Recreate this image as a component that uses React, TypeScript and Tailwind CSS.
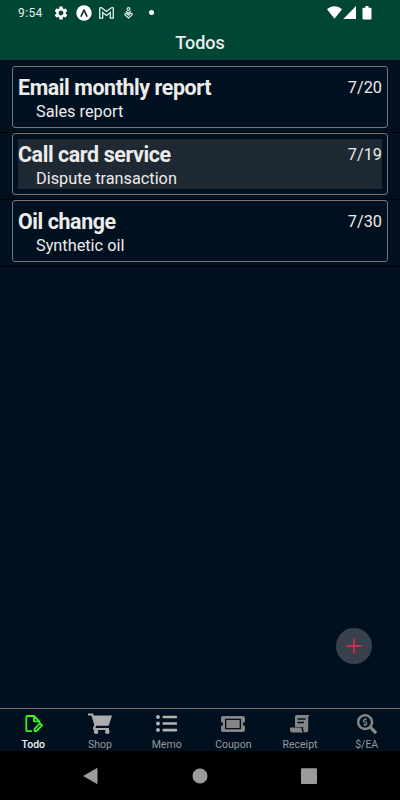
import clsx from "clsx";
import type { ReactNode } from "react";
import { FaListUl, FaSearchDollar, FaTicketAlt } from "react-icons/fa";
import { MdSettings } from "react-icons/md";

interface Todo {
  title: string;
  note: string;
  date: string;
  pressed?: boolean;
}

const TODOS: Todo[] = [
  { title: "Email monthly report", note: "Sales report", date: "7/20" },
  {
    title: "Call card service",
    note: "Dispute transaction",
    date: "7/19",
    pressed: true,
  },
  { title: "Oil change", note: "Synthetic oil", date: "7/30" },
];

function ExpoIcon() {
  return (
    <svg width="16" height="16" viewBox="0 0 16 16">
      <circle cx="8" cy="8" r="7.7" fill="#fff" />
      <path
        d="M5.2 11 8 5l2.8 6"
        fill="none"
        stroke="#12302a"
        strokeWidth="1.7"
        strokeLinecap="round"
        strokeLinejoin="round"
      />
    </svg>
  );
}

function MailIcon() {
  return (
    <svg
      width="15"
      height="12"
      viewBox="0 0 15 12"
      fill="none"
      stroke="#e8efec"
      strokeWidth="1.3"
    >
      <path d="M.7 1.8v9.3h3V5.6l3.8 2.9 3.8-2.9v5.5h3V1.8C14.3.6 13 .3 12 1.1L7.5 4.5 3 1.1C2 .3.7.6.7 1.8Z" />
    </svg>
  );
}

function HeartPinIcon() {
  return (
    <svg
      width="9"
      height="12"
      viewBox="0 0 9 12"
      fill="none"
      stroke="#e8efec"
      strokeWidth="1.1"
    >
      <circle cx="4.5" cy="2" r="1.4" />
      <path d="M2 4.3 4.5 6.3 7 4.3M4.5 11 1 7.9c-.5-1.1.6-2.2 1.7-1.4l1.8 1.7 1.8-1.7c1.1-.8 2.2.3 1.7 1.4Z" />
    </svg>
  );
}

function StatusBar() {
  return (
    <div className="flex h-[25px] items-center text-white">
      <span className="ml-[18px] w-[35px] text-xs tracking-[0.4px] text-[#e8efec]">
        9:54
      </span>
      <MdSettings className="size-4" />
      <div className="ml-[7px]">
        <ExpoIcon />
      </div>
      <div className="ml-[7px]">
        <MailIcon />
      </div>
      <div className="ml-[10px]">
        <HeartPinIcon />
      </div>
      <div className="ml-[15.5px] size-[5px] rounded-full bg-white" />
      <svg
        className="mr-7 ml-auto"
        width="45"
        height="14"
        viewBox="0 0 45 14"
        fill="#fff"
      >
        <path d="M0 3.3C4.5-.8 10.5-.8 15 3.3L7.5 12.8Z" />
        <path d="M29 0v13H16.3Z" />
        <path d="M36.5 1.7h2V0h3v1.7h2q1 0 1 1v9.8q0 1-1 1h-7q-1 0-1-1V2.7q0-1 1-1Z" />
      </svg>
    </div>
  );
}

function TodoRow({ todo }: { todo: Todo }) {
  return (
    <li className="h-[67px] border-b border-black px-3">
      <div className="h-[62px] rounded-[3px] border border-[#77736f] p-[5px]">
        <div
          className={clsx(
            "flex h-[50px] justify-between",
            todo.pressed && "bg-[#1f2933]",
          )}
        >
          <div>
            <h2 className="pt-[3px] text-[21.4px] leading-[25px] font-bold tracking-[-0.4px]">
              {todo.title}
            </h2>
            <p className="pt-px pl-[18px] text-[16.3px] leading-[22px]">
              {todo.note}
            </p>
          </div>
          <span className="pt-[5px] text-[16.3px] leading-[22px]">
            {todo.date}
          </span>
        </div>
      </div>
    </li>
  );
}

function NoteEditIcon() {
  return (
    <svg
      width="20"
      height="20"
      viewBox="0 0 20 20"
      fill="none"
      stroke="#3cf31c"
      strokeWidth="1.8"
      strokeLinejoin="round"
    >
      <path d="M9 17.2H4.3Q3.3 17.2 3.3 16.2V3Q3.3 2 4.3 2H11L16.3 7.3V9M11 2v5.3h5.3" />
      <path d="M11.5 17v-2.2l5.6-5.4 2 2-5.6 5.6Z" />
    </svg>
  );
}

function CartIcon() {
  return (
    <svg width="24" height="22" viewBox="0 0 24 22" fill="#acacac">
      <path d="M0 .5h5l.8 2H24l-3 9.3q-.4 1-1.5 1H8.2l-.8 2.1H21v2H6.2q-1.8-.4-1.3-2l1.5-3L3.3 2.5H0Z" />
      <circle cx="8" cy="18.8" r="2.3" />
      <circle cx="19.3" cy="18.8" r="2.3" />
    </svg>
  );
}

function ReceiptIcon() {
  return (
    <svg width="20" height="20" viewBox="0 0 20 20">
      <path
        fill="#858585"
        d="M6.5 1h13q-1.3 1-1.3 2.5V16q0 2.5-2.5 2.5-2 0-2.5-2.5v-3H5V2.5Q5 1 6.5 1ZM0 13.5h11.5V15q0 2.500 2 3.500H3q-3 0-3-3Z"
      />
      <path d="M7.5 5h8M7.5 8.5h6.5" stroke="#00101f" strokeWidth="1.3" />
    </svg>
  );
}

interface TabProps {
  label: string;
  active?: boolean;
  children: ReactNode;
}

function Tab({ label, active, children }: TabProps) {
  return (
    <div className="flex flex-1 flex-col items-center">
      <div className="flex h-[29px] shrink-0 items-center">{children}</div>
      <span
        className={clsx(
          "text-[10.5px] leading-[14px]",
          active ? "font-medium text-[#f0f0f0]" : "text-[#97999b]",
        )}
      >
        {label}
      </span>
    </div>
  );
}

export default function App() {
  return (
    <div className="relative flex h-[800px] w-[400px] flex-col overflow-hidden bg-[#00101f] font-['Roboto',sans-serif] text-[#ececec]">
      <header className="h-[60px] bg-[#004634]">
        <StatusBar />
        <h1 className="pt-[6px] text-center text-[18px] leading-6 font-medium">
          Todos
        </h1>
      </header>

      <main className="flex-1 pt-[6px]">
        <ul>
          {TODOS.map((todo) => (
            <TodoRow key={todo.title} todo={todo} />
          ))}
        </ul>
      </main>

      <button
        type="button"
        aria-label="Add todo"
        className="absolute top-[628px] left-[336px] flex size-9 items-center justify-center rounded-full bg-[#38414b]"
      >
        <svg width="16" height="16" viewBox="0 0 16 16">
          <path d="M8 .5v15M.5 8h15" stroke="#c92f48" strokeWidth="1.8" />
        </svg>
      </button>

      <nav className="flex h-[43px] border-t border-[#77736f]">
        <Tab label="Todo" active>
          <NoteEditIcon />
        </Tab>
        <Tab label="Shop">
          <CartIcon />
        </Tab>
        <Tab label="Memo">
          <FaListUl className="size-[21px] text-[#b4b4b4]" />
        </Tab>
        <Tab label="Coupon">
          <FaTicketAlt className="size-6 text-[#858585]" />
        </Tab>
        <Tab label="Receipt">
          <ReceiptIcon />
        </Tab>
        <Tab label="$/EA">
          <FaSearchDollar className="size-5 text-[#858585]" />
        </Tab>
      </nav>

      <footer className="flex h-[49px] items-center justify-center bg-black">
        <svg width="236" height="18" viewBox="0 0 236 18" fill="#9b9b9b">
          <path d="M1 9 15.5.8v16.4Z" />
          <circle cx="118" cy="9" r="7.5" />
          <rect x="219" y="1.3" width="16" height="15.7" rx="1" />
        </svg>
      </footer>
    </div>
  );
}
